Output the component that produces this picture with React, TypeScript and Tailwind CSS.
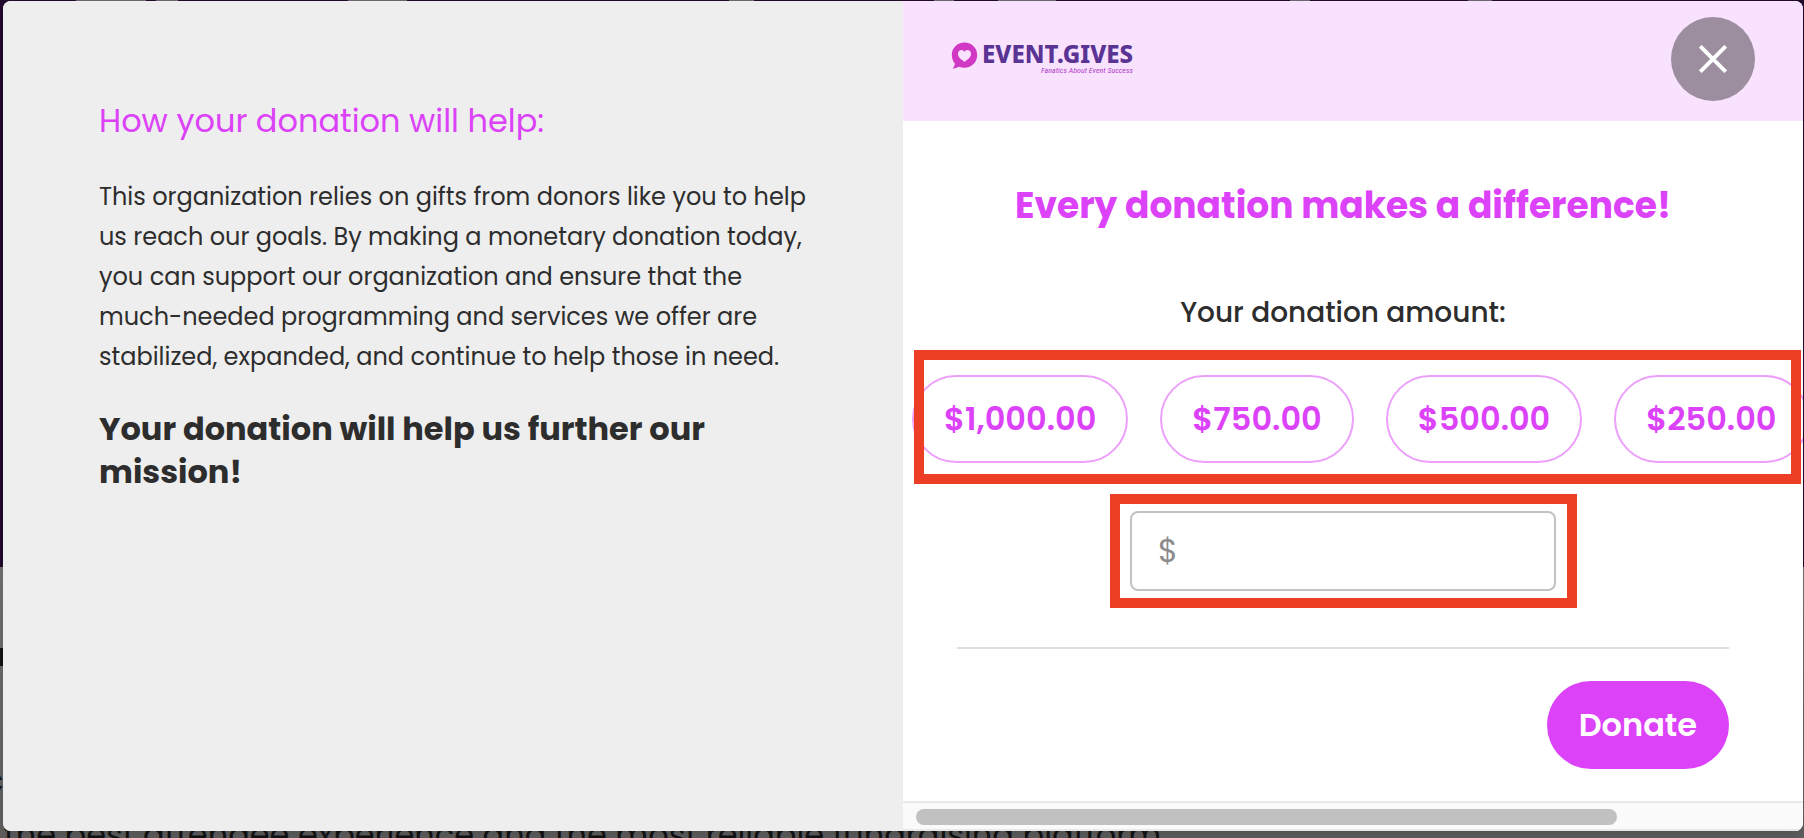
const amounts = ["$1,000.00", "$750.00", "$500.00", "$250.00"];

function Backdrop() {
  return (
    <div aria-hidden="true" className="absolute inset-0 flex flex-col overflow-hidden">
      <div className="h-[567px] shrink-0 bg-[#210a2c]">
        <div className="flex h-px">
          <div className="ml-[76px] w-[70px] bg-[#6b666e]" />
          <div className="ml-[10px] w-[22px] bg-[#6b666e]" />
          <div className="ml-[170px] w-[59px] bg-[#6b666e]" />
          <div className="ml-[322px] w-[25px] bg-[#6b666e]" />
          <div className="ml-[180px] w-[20px] bg-[#6b666e]" />
          <div className="ml-[44px] w-[58px] bg-[#6b666e]" />
          <div className="ml-[234px] w-[20px] bg-[#6b666e]" />
          <div className="ml-[158px] w-[24px] bg-[#6b666e]" />
        </div>
      </div>
      <div className="grow bg-linear-to-b from-[#6e6e6e] to-[#5d5d5d] text-[32px] leading-[60px] text-[#141414]">
        <p className="-ml-4 pt-[58px] font-semibold">a</p>
        <p className="-ml-4 mt-[66px]">c</p>
        <p className="-mt-[6px] pl-[4px] whitespace-nowrap">
          the best attendee experience and the most reliable fundraising platform.
        </p>
      </div>
    </div>
  );
}

function Logo() {
  return (
    <div className="flex items-start gap-1">
      <svg viewBox="0 0 27 28" className="h-7 w-[27px]" aria-hidden="true">
        <path
          d="M13.5 0.5C6.3 0.5 0.8 6 0.8 13c0 3.600 1.200 6.500 3.200 8.700L2 27l6-2.200c1.700 0.700 3.500 1 5.500 1 7.200 0 12.700-5.800 12.700-12.800S20.700 0.500 13.500 0.500z"
          fill="#d138c4"
        />
        <path
          d="M13.500 20C9.500 17 7 15 7 11.800 7 9.500 8.600 8 10.500 8c1.300 0 2.400 0.700 3 1.900C14.100 8.700 15.200 8 16.500 8c1.900 0 3.500 1.500 3.500 3.800C20 15 17.500 17 13.500 20z"
          fill="#f9e2fe"
        />
      </svg>
      <div className="flex flex-col items-end">
        <span className="font-['Noto_Sans'] text-[24px] leading-6 font-extrabold text-[#5a3494]">EVENT.GIVES</span>
        <span className="font-[Roboto_Condensed,Roboto,sans-serif] text-[8px] leading-[10px] text-[#b03cc8] italic">
          Fanatics About Event Success
        </span>
      </div>
    </div>
  );
}

export default function App() {
  return (
    <div className="relative flex h-screen overflow-hidden pt-px pr-px pb-[7px] pl-[3px] font-[Poppins,Inter,sans-serif] text-[#2d2d2d]">
      <Backdrop />
      <main
        role="dialog"
        aria-label="Donate"
        className="relative grid grow grid-cols-2 overflow-hidden rounded-lg bg-white shadow-lg"
      >
        <section className="bg-[#eeeeee] px-24 pt-24">
          <h2 className="text-[32px] leading-12 text-[#dc42f8]">How your donation will help:</h2>
          <p className="mt-8 text-[24px] leading-10">
            This organization relies on gifts from donors like you to help us reach our goals. By making a monetary
            donation today, you can support our organization and ensure that the much-needed programming and services we
            offer are stabilized, expanded, and continue to help those in need.
          </p>
          <p className="mt-[30px] text-[32px] leading-[43px] font-bold">
            Your donation will help us further our mission!
          </p>
        </section>

        <section className="flex min-w-0 flex-col">
          <header className="flex h-[120px] shrink-0 items-center justify-between bg-[#f9e2fe] px-12 pb-1">
            <Logo />
            <button
              type="button"
              aria-label="Close"
              className="flex size-[84px] items-center justify-center rounded-full bg-[#9c8d9f]"
            >
              <svg viewBox="0 0 28 28" className="size-7" stroke="white" strokeWidth="3.900" aria-hidden="true">
                <path d="M1.300 1.300L26.700 26.700M26.700 1.300L1.300 26.700" />
              </svg>
            </button>
          </header>

          <form className="flex grow flex-col pr-[74px] pl-[54px]">
            <h1 className="mt-15 text-center text-[36px] leading-[50px] font-bold whitespace-nowrap text-[#dc42f8]">
              Every donation makes a difference!
            </h1>
            <label htmlFor="amount" className="mt-[62px] text-center text-[28px] leading-10 font-medium">
              Your donation amount:
            </label>
            <div className="relative -mr-[74px] -ml-[45px] mt-[42px] flex gap-8">
              {amounts.map((amount) => (
                <button
                  key={amount}
                  type="button"
                  className="h-[88px] shrink-0 rounded-full border-2 border-[#eda0fb] px-[30px] text-[32px] font-semibold text-[#dc42f8]"
                >
                  {amount}
                </button>
              ))}
              <div className="pointer-events-none absolute -top-[25px] right-[2px] left-[2px] h-[134px] border-10 border-[#ec3f26]" />
            </div>
            <div className="relative mt-12 w-[426px] self-center">
              <input
                id="amount"
                placeholder="$"
                className="h-20 w-full rounded-lg border-2 border-[#c2c2c2] px-[26px] text-[32px] placeholder:text-[#8c8c8c]"
              />
              <div className="pointer-events-none absolute -top-[17px] -right-[21px] -left-[20px] h-[114px] border-10 border-[#ec3f26]" />
            </div>
            <hr className="mt-14 border-t-2 border-[#e0e0e0]" />
            <button
              type="submit"
              className="mt-8 h-[88px] self-end rounded-full bg-[#dc42f8] px-8 text-[32px] font-semibold text-white"
            >
              Donate
            </button>
          </form>

          <div className="h-[30px] shrink-0 border-y-2 border-[#e8e8e8] bg-[#fafafa] px-[13px] pt-[6px]">
            <div className="h-4 w-[701px] rounded-full bg-[#c1c1c1]" />
          </div>
        </section>
      </main>
    </div>
  );
}
